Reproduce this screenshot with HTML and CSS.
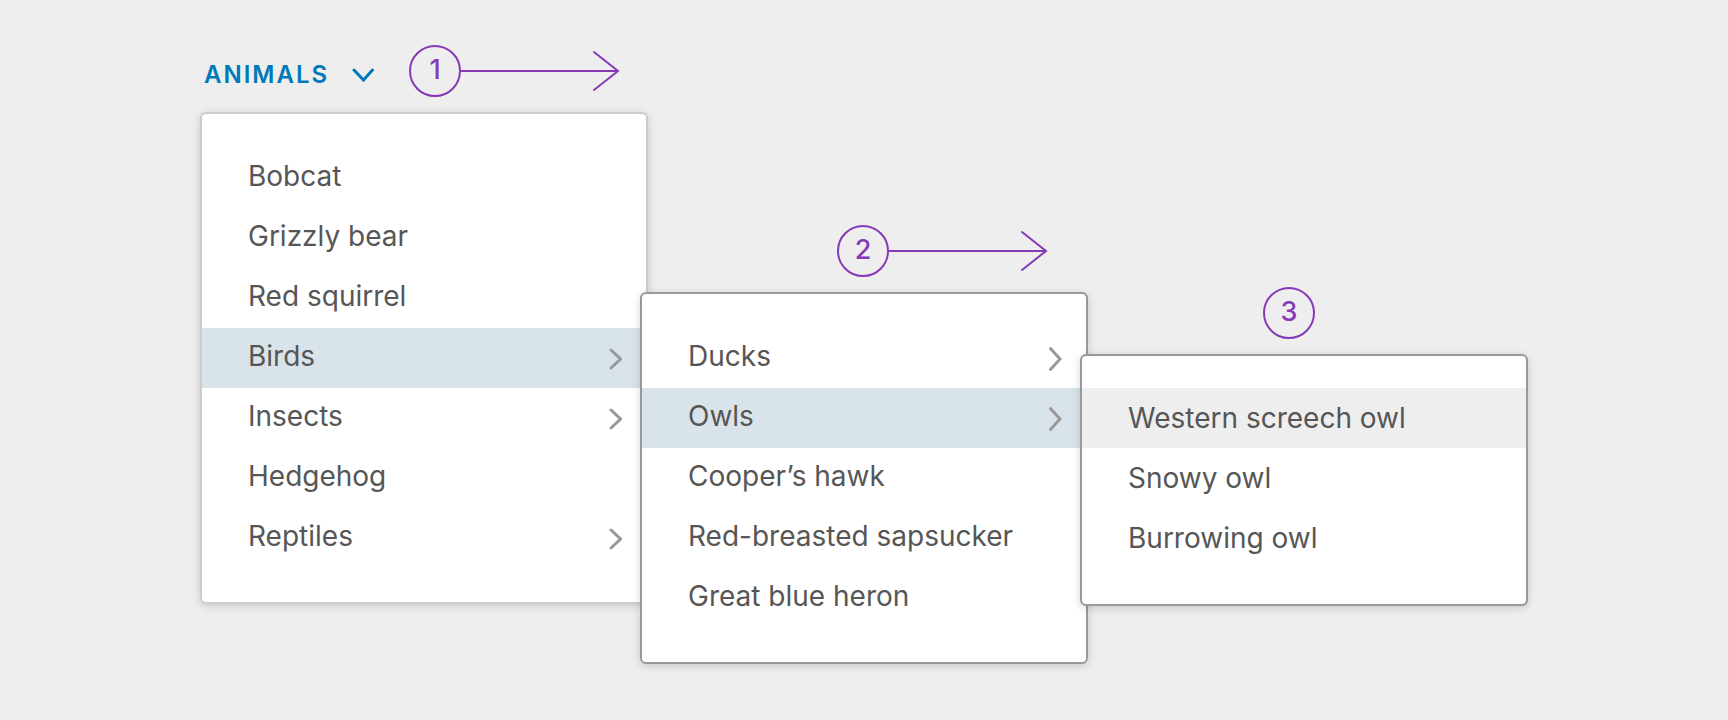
FILE: index.html
```html
<!DOCTYPE html>
<html lang="en">
<head>
<meta charset="utf-8">
<meta name="viewport" content="width=device-width, initial-scale=1">
<title>Nested dropdown menus</title>
<link rel="stylesheet" href="styles.css">
</head>
<body>
<main class="cascade">
  <section class="level level-first">
    <header class="level-head">
      <button class="trigger" type="button" aria-haspopup="true" aria-expanded="true">
        Animals
        <svg class="trigger-caret" viewBox="0 0 22 14" aria-hidden="true"><path d="M2 2 11.5 12 20.500 2"/></svg>
      </button>
      <div class="step">
        <span class="step-number">1</span>
        <svg class="step-arrow" viewBox="0 0 160 42" aria-hidden="true"><path d="M0 21H157M133 2 157 21 133 40"/></svg>
      </div>
    </header>
    <ul class="menu">
      <li><button class="item" type="button">Bobcat</button></li>
      <li><button class="item" type="button">Grizzly bear</button></li>
      <li><button class="item" type="button">Red squirrel</button></li>
      <li><button class="item item-open" type="button" aria-expanded="true">Birds<svg class="item-caret" viewBox="0 0 14 26" aria-hidden="true"><path d="M3 4 12.500 13 3 22"/></svg></button></li>
      <li><button class="item" type="button">Insects<svg class="item-caret" viewBox="0 0 14 26" aria-hidden="true"><path d="M3 4 12.500 13 3 22"/></svg></button></li>
      <li><button class="item" type="button">Hedgehog</button></li>
      <li><button class="item" type="button">Reptiles<svg class="item-caret" viewBox="0 0 14 26" aria-hidden="true"><path d="M3 4 12.500 13 3 22"/></svg></button></li>
    </ul>
  </section>

  <section class="level level-second">
    <header class="level-head">
      <div class="step">
        <span class="step-number">2</span>
        <svg class="step-arrow" viewBox="0 0 160 42" aria-hidden="true"><path d="M0 21H157M133 2 157 21 133 40"/></svg>
      </div>
    </header>
    <ul class="menu menu-nested">
      <li><button class="item" type="button">Ducks<svg class="item-caret" viewBox="0 0 14 26" aria-hidden="true"><path d="M2.500 2.500 12 13 2.500 23.500"/></svg></button></li>
      <li><button class="item item-open" type="button" aria-expanded="true">Owls<svg class="item-caret" viewBox="0 0 14 26" aria-hidden="true"><path d="M2.500 2.500 12 13 2.500 23.500"/></svg></button></li>
      <li><button class="item" type="button">Cooper’s hawk</button></li>
      <li><button class="item" type="button">Red-breasted sapsucker</button></li>
      <li><button class="item" type="button">Great blue heron</button></li>
    </ul>
  </section>

  <section class="level level-third">
    <header class="level-head">
      <div class="step">
        <span class="step-number">3</span>
      </div>
    </header>
    <ul class="menu menu-nested menu-last">
      <li><button class="item item-hover" type="button">Western screech owl</button></li>
      <li><button class="item" type="button">Snowy owl</button></li>
      <li><button class="item" type="button">Burrowing owl</button></li>
    </ul>
  </section>
</main>
</body>
</html>
```

FILE: styles.css
```css
* {
  box-sizing: border-box;
}

body {
  margin: 0;
  background: #eee;
  color: #565656;
  font-family: Inter, "Open Sans", sans-serif;
}

button {
  border: 0;
  background: none;
  font: inherit;
  color: inherit;
  text-align: left;
  cursor: pointer;
}

.cascade {
  display: flex;
  justify-content: center;
  align-items: flex-start;
  padding: 45px 24px;
}

/* Each level opens over the right edge of the one before it. */
.level {
  flex: 0 1 448px;
}

.level + .level {
  margin-left: -8px;
}

.level-second {
  padding-top: 180px;
}

.level-third {
  padding-top: 242px;
}

.level-head {
  display: grid;
  align-items: center;
  margin-bottom: 15px;
}

.level-first .level-head {
  grid-template-columns: 209px 1fr;
}

.level-second .level-head {
  padding-left: 197px;
}

.level-third .level-head {
  padding-left: 183px;
}

.trigger {
  display: flex;
  align-items: center;
  gap: 23px;
  padding: 8px 0 0 4px;
  color: #0079b8;
  font-size: 24px;
  font-weight: 600;
  letter-spacing: 2px;
  line-height: 32px;
  text-transform: uppercase;
}

.trigger-caret {
  flex: none;
  width: 22px;
  height: 14px;
}

.step {
  display: flex;
  align-items: center;
  color: #873ab7;
}

.step-number {
  flex: none;
  width: 52px;
  height: 52px;
  border: 2px solid;
  border-radius: 50%;
  font-size: 27px;
  font-weight: 500;
  line-height: 46px;
  text-align: center;
}

.step-arrow {
  flex: none;
  width: 160px;
  height: 42px;
}

svg {
  fill: none;
  stroke: currentColor;
  stroke-width: 2;
  stroke-linecap: round;
}

.trigger-caret,
.item-caret {
  stroke-width: 3;
}

.menu {
  position: relative;
  margin: 0;
  padding: 34px 0;
  border: 2px solid #ccc;
  border-radius: 6px;
  background: #fff;
  box-shadow: 0 2px 8px rgba(0, 0, 0, 0.16);
  list-style: none;
}

.menu-nested {
  border-color: #999;
}

.menu-last {
  padding: 32px 0 36px;
}

.item {
  display: flex;
  align-items: center;
  justify-content: space-between;
  width: 100%;
  height: 60px;
  padding: 0 24px 4px 46px;
  font-size: 28px;
  white-space: nowrap;
}

.menu-last .item {
  padding-bottom: 0;
}

.item-open {
  background: #d9e4ea;
}

.item-hover {
  background: #eee;
}

.item-caret {
  flex: none;
  align-self: flex-end;
  width: 14px;
  height: 26px;
  margin-bottom: 12px;
  color: #999;
}
```
